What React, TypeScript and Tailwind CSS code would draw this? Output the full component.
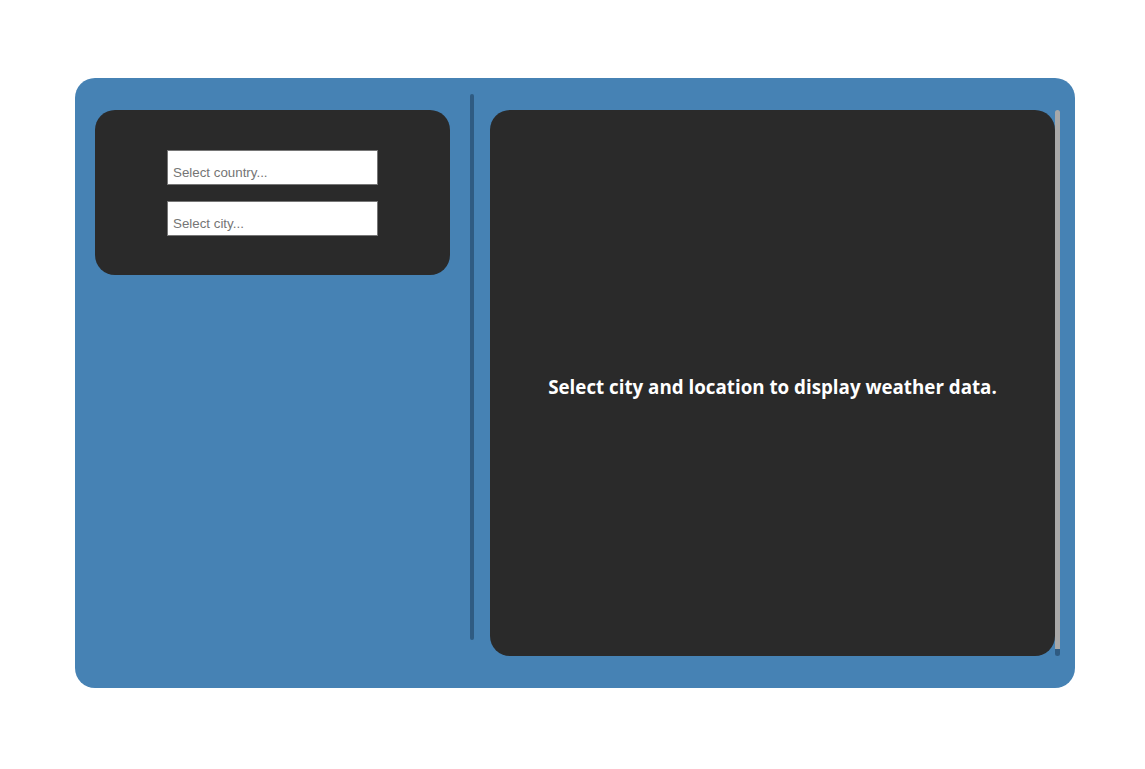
import React from "react";

export default function App() {
  return (
    <div className="w-[1145px] h-[769px] bg-white flex items-start pl-[75px] pt-[78px]">
      <div className="w-[1000px] h-[610px] bg-[#4682b4] rounded-[20px] flex pl-5 pr-[15px] py-8">
        <div className="w-[355px] self-start bg-[#2a2a2a] rounded-[20px] flex flex-col items-center pt-10 pb-[39px] gap-4">
          <input
            placeholder="Select country..."
            className="w-[211px] h-[35px] bg-white border border-[#767676] px-[5px] pt-[10px] text-[13.33px] text-black placeholder:text-[#757575] outline-none"
            style={{ fontFamily: '"Liberation Sans", Arial, sans-serif' }}
          />
          <input
            placeholder="Select city..."
            className="w-[211px] h-[35px] bg-white border border-[#767676] px-[5px] pt-[10px] text-[13.33px] text-black placeholder:text-[#757575] outline-none"
            style={{ fontFamily: '"Liberation Sans", Arial, sans-serif' }}
          />
        </div>
        <div className="w-[4px] ml-5 mr-4 -mt-4 mb-4 rounded-full bg-[#2f5b82]" />
        <div className="flex-1 flex">
          <div className="flex-1 bg-[#2a2a2a] rounded-[20px] flex items-center justify-center">
            <p
              className="text-white font-bold text-[18.75px] mt-[8px]"
              style={{ fontFamily: '"Open Sans", sans-serif' }}
            >
              Select city and location to display weather data.
            </p>
          </div>
          <div className="w-[5px] flex flex-col">
            <div className="flex-1 bg-[#a8a8a8] rounded-t-full" />
            <div className="h-[7px] bg-[#2f5b82] rounded-b-full" />
          </div>
        </div>
      </div>
    </div>
  );
}
